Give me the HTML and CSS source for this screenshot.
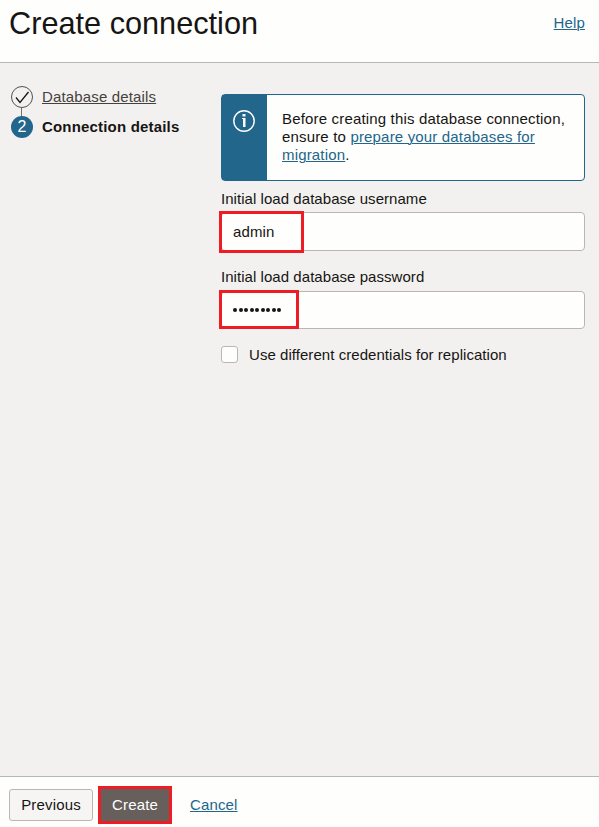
FILE: index.html
```html
<!DOCTYPE html>
<html lang="en">
<head>
<meta charset="utf-8">
<title>Create connection</title>
<link rel="stylesheet" href="styles.css">
</head>
<body>
<header class="header">
  <h1 class="title">Create connection</h1>
  <a class="link help" href="#">Help</a>
</header>
<main class="main">
  <nav class="steps">
    <a class="step done" href="#">
      <svg class="marker" width="22" height="22" viewBox="0 0 22 22" fill="none"><circle cx="11" cy="11" r="10.5" stroke="#55504c"/><path d="M5 11.5l4 5L17.5 6" stroke="#161513" stroke-width="1.3"/></svg>
      <span class="step-name">Database details</span>
    </a>
    <div class="connector"></div>
    <div class="step current"><span class="marker number">2</span><span class="step-name">Connection details</span></div>
  </nav>
  <section class="form">
    <div class="info">
      <div class="info-icon">
        <svg width="22" height="22" viewBox="0 0 22 22" fill="none"><circle cx="11" cy="11" r="10.2" stroke="#fff" stroke-width="1.4"/><path d="M9.5 4h3v2.5h-3zM9 8h3.5v9H10V9H9z" fill="#fff"/></svg>
      </div>
      <p class="info-text">Before creating this database connection,<br>ensure to <a class="link" href="#">prepare your databases for<br>migration</a>.</p>
    </div>
    <label class="label">Initial load database username</label>
    <div class="field username"><span class="value">admin</span><i class="highlight"></i></div>
    <label class="label password-label">Initial load database password</label>
    <div class="field password"><span class="dots"><i></i><i></i><i></i><i></i><i></i><i></i><i></i><i></i><i></i></span><i class="highlight"></i></div>
    <label class="check"><span class="box"></span><span class="check-text">Use different credentials for replication</span></label>
  </section>
</main>
<footer class="footer">
  <button class="button previous">Previous</button>
  <button class="button create">Create</button>
  <a class="link cancel" href="#">Cancel</a>
</footer>
</body>
</html>
```
FILE: styles.css
```css
* { box-sizing: border-box; }
body {
  margin: 0;
  height: 827px;
  display: flex;
  flex-direction: column;
  overflow: hidden;
  background: #f3f1f0;
  color: #161513;
  font: 15px/18px "Liberation Sans", Arial, sans-serif;
}
.header {
  height: 63px;
  display: flex;
  justify-content: space-between;
  padding: 0 14px 0 9px;
  background: #fefefc;
  border-bottom: 1px solid #bcb6b1;
}
.title {
  margin: 4px 0 0;
  font-size: 30.7px;
  font-weight: 400;
  line-height: 40px;
}
.link { color: #22668c; text-decoration: underline; text-underline-offset: 1px; text-decoration-thickness: 1px; }
.help { margin-top: 14px; letter-spacing: 0.15px; }
.main { flex: 1; display: flex; align-items: flex-start; padding: 0 14px 0 11px; }
.steps { width: 210px; padding-top: 23px; }
.step { display: flex; align-items: center; height: 22px; gap: 9px; color: inherit; text-decoration: none; }
.step-name { letter-spacing: 0.15px; }
.marker { width: 22px; height: 22px; flex: none; }
.done .step-name { color: #45413d; text-decoration: underline 1px; text-underline-offset: 1px; }
.connector { width: 1px; height: 8px; margin-left: 10px; background: #77716c; }
.number {
  border-radius: 50%;
  background: #22668c;
  color: #fff;
  font-size: 16px;
  line-height: 22px;
  text-align: center;
}
.current .step-name { font-weight: 700; letter-spacing: 0.18px; }
.form { width: 364px; padding-top: 31px; }
.info {
  height: 87px;
  display: flex;
  border: 1px solid #22668c;
  border-radius: 4px;
  background: #fefefc;
}
.info-icon { width: 45px; padding: 15px 0 0 11px; background: #22668c; }
.info-text { margin: 15px 0 0 15px; white-space: nowrap; letter-spacing: 0.17px; }
.label { display: block; height: 18px; margin: 9px 0 4px; letter-spacing: 0.05px; }
.field {
  position: relative;
  height: 39px;
  display: flex;
  align-items: center;
  padding-left: 11px;
  border: 1px solid #bcb6b1;
  border-radius: 4px;
  background: #fefefc;
}
.value { letter-spacing: 0.1px; }
.highlight { position: absolute; left: -3px; border: 3px solid #ee1c25; }
.username .highlight { top: -2px; width: 85px; height: 42px; }
.password { height: 38px; }
.password .highlight { top: -2px; width: 80px; height: 39px; }
.password-label { margin-top: 17px; margin-bottom: 5px; }
.dots { display: flex; gap: 1.5px; }
.dots i { width: 4px; height: 4px; border-radius: 50%; background: #161513; }
.check { display: flex; align-items: flex-start; gap: 11px; margin-top: 17px; letter-spacing: 0.05px; }
.box { width: 17px; height: 17px; border: 1px solid #bcb6b1; border-radius: 3px; background: #fefefc; }
.footer {
  height: 51px;
  display: flex;
  align-items: flex-start;
  padding: 9px 0 0 9px;
  background: #fefefc;
  border-top: 1px solid #bcb6b1;
}
.button { font: inherit; color: inherit; padding: 0; white-space: nowrap; letter-spacing: 0.15px; }
.previous {
  width: 84px;
  height: 32px;
  margin: 3px 5px 0 0;
  border: 1px solid #bcb6b1;
  border-radius: 3px;
  background: #f7f5f4;
}
.create { width: 74px; height: 38px; border: 3px solid #ee1c25; background: #665f5b; color: #fff; }
.cancel { margin: 10px 0 0 18px; letter-spacing: 0.15px; }
```
